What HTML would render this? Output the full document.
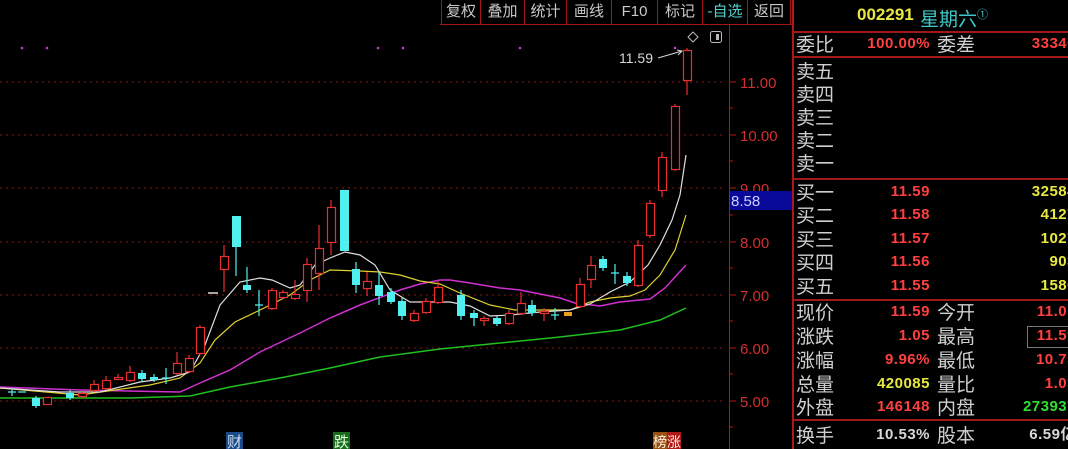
<!DOCTYPE html>
<html><head><meta charset="utf-8"><style>
html,body{margin:0;padding:0;background:#000;width:1068px;height:449px;overflow:hidden}
body{position:relative;font-family:"Liberation Sans","Noto Sans CJK SC",sans-serif}
.a{position:absolute;white-space:nowrap}
.tb{position:absolute;top:0;height:24px;line-height:24px;color:#c8c8c8;font-size:15px;text-align:center;border-right:1px solid #a01818}
.lb{position:absolute;left:796px;color:#d0d0d0;font-size:19px;line-height:22px;font-family:"Noto Sans CJK SC",sans-serif}
.lb2{position:absolute;left:937px;color:#d0d0d0;font-size:19px;line-height:22px;font-family:"Noto Sans CJK SC",sans-serif}
.v{position:absolute;right:138px;font-size:15px;font-weight:bold;line-height:22px;letter-spacing:0.5px}
.v2{position:absolute;left:1000px;width:76px;text-align:right;font-size:15px;font-weight:bold;line-height:22px;letter-spacing:0.5px}
.r{color:#ff4040}.y{color:#e8e840}.g{color:#30e030}.w{color:#d8d8d8}
.hl{position:absolute;left:793px;width:275px;height:2px;background:#a01818}
</style></head><body>
<svg class="a" style="left:0;top:0" width="792" height="449">
<g stroke="#8a1818" stroke-dasharray="2,4" stroke-width="1">
<line x1="0" y1="82" x2="722" y2="82"/><line x1="0" y1="135" x2="722" y2="135"/><line x1="0" y1="188" x2="722" y2="188"/><line x1="0" y1="242" x2="722" y2="242"/><line x1="0" y1="295" x2="722" y2="295"/><line x1="0" y1="348" x2="722" y2="348"/><line x1="0" y1="401" x2="722" y2="401"/>
</g>
<line x1="440" y1="24.5" x2="792" y2="24.5" stroke="#a01818"/>
<line x1="729.5" y1="24" x2="729.5" y2="449" stroke="#b01818"/>
<g stroke="#b01818"><line x1="729" y1="82" x2="736" y2="82"/><line x1="729" y1="135" x2="736" y2="135"/><line x1="729" y1="188" x2="736" y2="188"/><line x1="729" y1="242" x2="736" y2="242"/><line x1="729" y1="295" x2="736" y2="295"/><line x1="729" y1="348" x2="736" y2="348"/><line x1="729" y1="401" x2="736" y2="401"/>
<line x1="729" y1="108" x2="733" y2="108"/><line x1="729" y1="161" x2="733" y2="161"/><line x1="729" y1="215" x2="733" y2="215"/><line x1="729" y1="268" x2="733" y2="268"/><line x1="729" y1="321" x2="733" y2="321"/><line x1="729" y1="374" x2="733" y2="374"/><line x1="729" y1="427" x2="733" y2="427"/></g>
<g font-family="Liberation Sans" font-size="15" fill="#d03030">
<text x="740" y="88">11.00</text><text x="740" y="141">10.00</text><text x="740" y="194">9.00</text><text x="740" y="248">8.00</text><text x="740" y="301">7.00</text><text x="740" y="354">6.00</text><text x="740" y="407">5.00</text>
</g>
<rect x="730" y="191" width="62" height="19" fill="#0a0a9a"/>
<text x="731" y="206" font-family="Liberation Sans" font-size="15" fill="#d0d0ff">8.58</text>
<g fill="#c040c0"><circle cx="22" cy="48" r="1.3"/><circle cx="47" cy="48" r="1.3"/><circle cx="378" cy="48" r="1.3"/><circle cx="403" cy="48" r="1.3"/><circle cx="520" cy="48" r="1.3"/><circle cx="675" cy="48" r="1.3"/></g>
<text x="619" y="63" font-family="Liberation Sans" font-size="14" fill="#d8d8d8">11.59</text>
<path d="M658 58 L682 51 M677 50 L682 51 L678 55" stroke="#d8d8d8" fill="none"/>
<path d="M693 32 L698 37 L693 42 L688 37 Z" stroke="#bbb" fill="none"/>
<rect x="710.5" y="31.5" width="11" height="11" rx="2" stroke="#bbb" fill="none"/><rect x="716" y="34" width="3" height="6" fill="#bbb"/>
<!-- MA lines -->
<polyline fill="none" stroke="#20c020" stroke-width="1.5" points="0,398 130,398 190,396 230,387 280,378 330,368 380,357 440,349 500,343 560,337 620,330 660,320 686,308"/>
<polyline fill="none" stroke="#d030d0" stroke-width="1.5" points="0,387 80,390 180,392 200,383 230,370 260,352 300,333 330,318 360,305 400,290 420,284 440,280 450,280 470,283 500,288 520,290 560,298 575,303 600,306 620,302 650,299 665,288 686,265"/>
<polyline fill="none" stroke="#e0d030" stroke-width="1.2" points="0,388 80,395 150,385 180,378 200,363 215,340 235,322 260,310 290,295 310,280 330,270 360,271 380,272 400,275 420,281 440,284 460,293 490,305 515,310 545,310 570,310 590,302 610,298 630,296 645,290 660,275 675,250 686,215"/>
<polyline fill="none" stroke="#e0e0e0" stroke-width="1.2" points="0,388 60,392 100,392 140,382 170,378 190,372 205,345 220,305 240,282 260,278 272,280 290,288 300,285 315,265 330,258 345,252 360,255 375,265 390,290 410,302 430,302 450,302 470,306 490,316 510,315 540,312 570,310 590,304 610,292 630,282 648,265 660,245 672,220 680,195 686,155"/>
<!-- red candles (hollow) -->
<g stroke="#e83030" fill="#000" stroke-width="1.2" id="rc"></g>
<g stroke="#e83030" fill="none" stroke-width="1.2">
<path d="M47 397v8M82 392v6M94 380v12M106 376v14M118 374v6M130 366v16M177 352v23M189 355v18M200 325v30M224 245v47M272 288v22M283 290v9M295 280v20M307 258v44M319 225v65M331 200v55M367 272v24M414 310v12M426 298v16M438 280v24M484 316v10M509 310v15M521 292v23M544 308v13M580 278v30M591 256v32M638 240v47M650 200v38M662 152v45M675 104v67M687 48v47"/>
</g>
<g fill="#000" stroke="#e83030" stroke-width="1.2">
<rect x="43.5" y="397.5" width="8" height="7"/><rect x="78.5" y="393.5" width="8" height="3"/><rect x="90.5" y="384.5" width="8" height="6"/><rect x="102.5" y="380.5" width="8" height="8"/><rect x="114.5" y="377.5" width="8" height="2"/><rect x="126.5" y="372.5" width="8" height="8"/><rect x="173.5" y="363.5" width="8" height="10"/><rect x="185.5" y="358.5" width="8" height="13"/><rect x="196.5" y="327.5" width="8" height="26"/><rect x="220.5" y="256.5" width="8" height="13"/><rect x="268.5" y="290.5" width="8" height="18"/><rect x="279.5" y="292.5" width="8" height="5"/><rect x="291.5" y="294.5" width="8" height="4"/><rect x="303.5" y="264.5" width="8" height="26"/><rect x="315.5" y="248.5" width="8" height="25"/><rect x="327.5" y="207.5" width="8" height="35"/><rect x="363.5" y="281.5" width="8" height="7"/><rect x="410.5" y="313.5" width="8" height="7"/><rect x="422.5" y="301.5" width="8" height="11"/><rect x="434.5" y="287.5" width="8" height="15"/><rect x="480.5" y="318.5" width="8" height="2"/><rect x="505.5" y="313.5" width="8" height="10"/><rect x="517.5" y="303.5" width="8" height="10"/><rect x="540.5" y="311.5" width="8" height="2"/><rect x="576.5" y="284.5" width="8" height="22"/><rect x="587.5" y="265.5" width="8" height="14"/><rect x="634.5" y="245.5" width="8" height="40"/><rect x="646.5" y="203.5" width="8" height="32"/><rect x="658.5" y="157.5" width="8" height="33"/><rect x="671.5" y="106.5" width="8" height="63"/><rect x="683.5" y="50.5" width="8" height="30"/>
</g>
<rect x="564" y="312" width="8" height="4" fill="#e8a020"/>
<!-- cyan candles -->
<g stroke="#50f0f0" stroke-width="1.2"><path d="M12 388v8M36 396v12M70 390v10M142 370v12M154 374v8M166 368v16M236 216v60M247 267v26M259 290v26M356 262v31M379 272v33M391 288v16M402 298v22M461 290v30M474 310v16M497 316v10M532 300v16M555 308v12M603 256v15M615 264v20M627 272v14M8 392h8M18 392h8M162 378h8M255 305h8M551 315h8M611 273h8"/></g>
<g fill="#50f0f0">
<rect x="32" y="398" width="8" height="8"/><rect x="66" y="393" width="8" height="5"/><rect x="138" y="373" width="8" height="6"/><rect x="150" y="377" width="8" height="3"/><rect x="232" y="216" width="9" height="31"/><rect x="243" y="285" width="8" height="5"/><rect x="340" y="190" width="9" height="61"/><rect x="352" y="269" width="8" height="16"/><rect x="375" y="285" width="8" height="11"/><rect x="387" y="292" width="8" height="10"/><rect x="398" y="301" width="8" height="15"/><rect x="457" y="295" width="8" height="21"/><rect x="470" y="313" width="8" height="5"/><rect x="493" y="318" width="8" height="6"/><rect x="528" y="305" width="8" height="8"/><rect x="599" y="259" width="8" height="9"/><rect x="623" y="276" width="8" height="7"/>
</g>
<line x1="208" y1="293" x2="218" y2="293" stroke="#ddd" stroke-width="1.5"/>
<!-- bottom markers -->
<rect x="226" y="432" width="17" height="17" fill="#1a4a8a"/><text x="227" y="447" font-family="Noto Sans CJK SC" font-size="15" fill="#cde">财</text>
<rect x="333" y="432" width="17" height="17" fill="#1a6a1a"/><text x="334" y="447" font-family="Noto Sans CJK SC" font-size="15" fill="#dfd">跌</text>
<rect x="653" y="432" width="14" height="17" fill="#9a5010"/><rect x="667" y="432" width="14" height="17" fill="#b01818"/><text x="653" y="447" font-family="Noto Sans CJK SC" font-size="14" fill="#fed">榜涨</text>
</svg>
<div class="a" style="left:441px;top:0;width:1px;height:24px;background:#a01818"></div>
<div class="tb" style="left:442px;width:38px">复权</div>
<div class="tb" style="left:481px;width:43px">叠加</div>
<div class="tb" style="left:525px;width:41px">统计</div>
<div class="tb" style="left:567px;width:44px">画线</div>
<div class="tb" style="left:612px;width:45px">F10</div>
<div class="tb" style="left:658px;width:44px">标记</div>
<div class="tb" style="left:703px;width:44px;color:#50d0d0">-自选</div>
<div class="tb" style="left:748px;width:42px">返回</div>
<div class="a" style="left:792px;top:0;width:2px;height:449px;background:#b01818"></div>
<div class="a y" style="left:857px;top:4px;font-size:17px;font-weight:bold;line-height:22px">002291</div>
<div class="a" style="left:920px;top:3px;font-size:19px;line-height:22px;color:#40c8c8;font-family:'Noto Sans CJK SC',sans-serif">星期六<sup style="font-size:11px">①</sup></div>
<div class="hl" style="top:31px"></div><div class="hl" style="top:56px"></div><div class="hl" style="top:178px"></div><div class="hl" style="top:299px"></div><div class="hl" style="top:419px"></div>
<div class="lb" style="top:33px">委比</div><div class="v r" style="top:33px">100.00%</div><div class="lb2" style="top:33px">委差</div><div class="v2 r" style="top:33px">33340</div>
<div class="lb" style="top:60px">卖五</div><div class="lb" style="top:83px">卖四</div><div class="lb" style="top:106px">卖三</div><div class="lb" style="top:129px">卖二</div><div class="lb" style="top:152px">卖一</div>
<div class="lb" style="top:181px">买一</div><div class="v r" style="top:181px">11.59</div><div class="v2 y" style="top:181px">32584</div>
<div class="lb" style="top:204px">买二</div><div class="v r" style="top:204px">11.58</div><div class="v2 y" style="top:204px">4127</div>
<div class="lb" style="top:228px">买三</div><div class="v r" style="top:228px">11.57</div><div class="v2 y" style="top:228px">1027</div>
<div class="lb" style="top:251px">买四</div><div class="v r" style="top:251px">11.56</div><div class="v2 y" style="top:251px">903</div>
<div class="lb" style="top:275px">买五</div><div class="v r" style="top:275px">11.55</div><div class="v2 y" style="top:275px">1580</div>
<div class="lb" style="top:301px">现价</div><div class="v r" style="top:301px">11.59</div><div class="lb2" style="top:301px">今开</div><div class="v2 r" style="top:301px">11.05</div>
<div class="lb" style="top:325px">涨跌</div><div class="v r" style="top:325px">1.05</div><div class="lb2" style="top:325px">最高</div><div class="v2 r" style="top:325px">11.59</div>
<div class="a" style="left:1027px;top:326px;width:45px;height:20px;border:1px solid #777"></div>
<div class="lb" style="top:349px">涨幅</div><div class="v r" style="top:349px">9.96%</div><div class="lb2" style="top:349px">最低</div><div class="v2 r" style="top:349px">10.75</div>
<div class="lb" style="top:373px">总量</div><div class="v y" style="top:373px">420085</div><div class="lb2" style="top:373px">量比</div><div class="v2 r" style="top:373px">1.03</div>
<div class="lb" style="top:396px">外盘</div><div class="v r" style="top:396px">146148</div><div class="lb2" style="top:396px">内盘</div><div class="v2 g" style="top:396px">273937</div>
<div class="lb" style="top:424px">换手</div><div class="v w" style="top:424px">10.53%</div><div class="lb2" style="top:424px">股本</div><div class="v2 w" style="top:424px">6.59亿</div>
</body></html>
